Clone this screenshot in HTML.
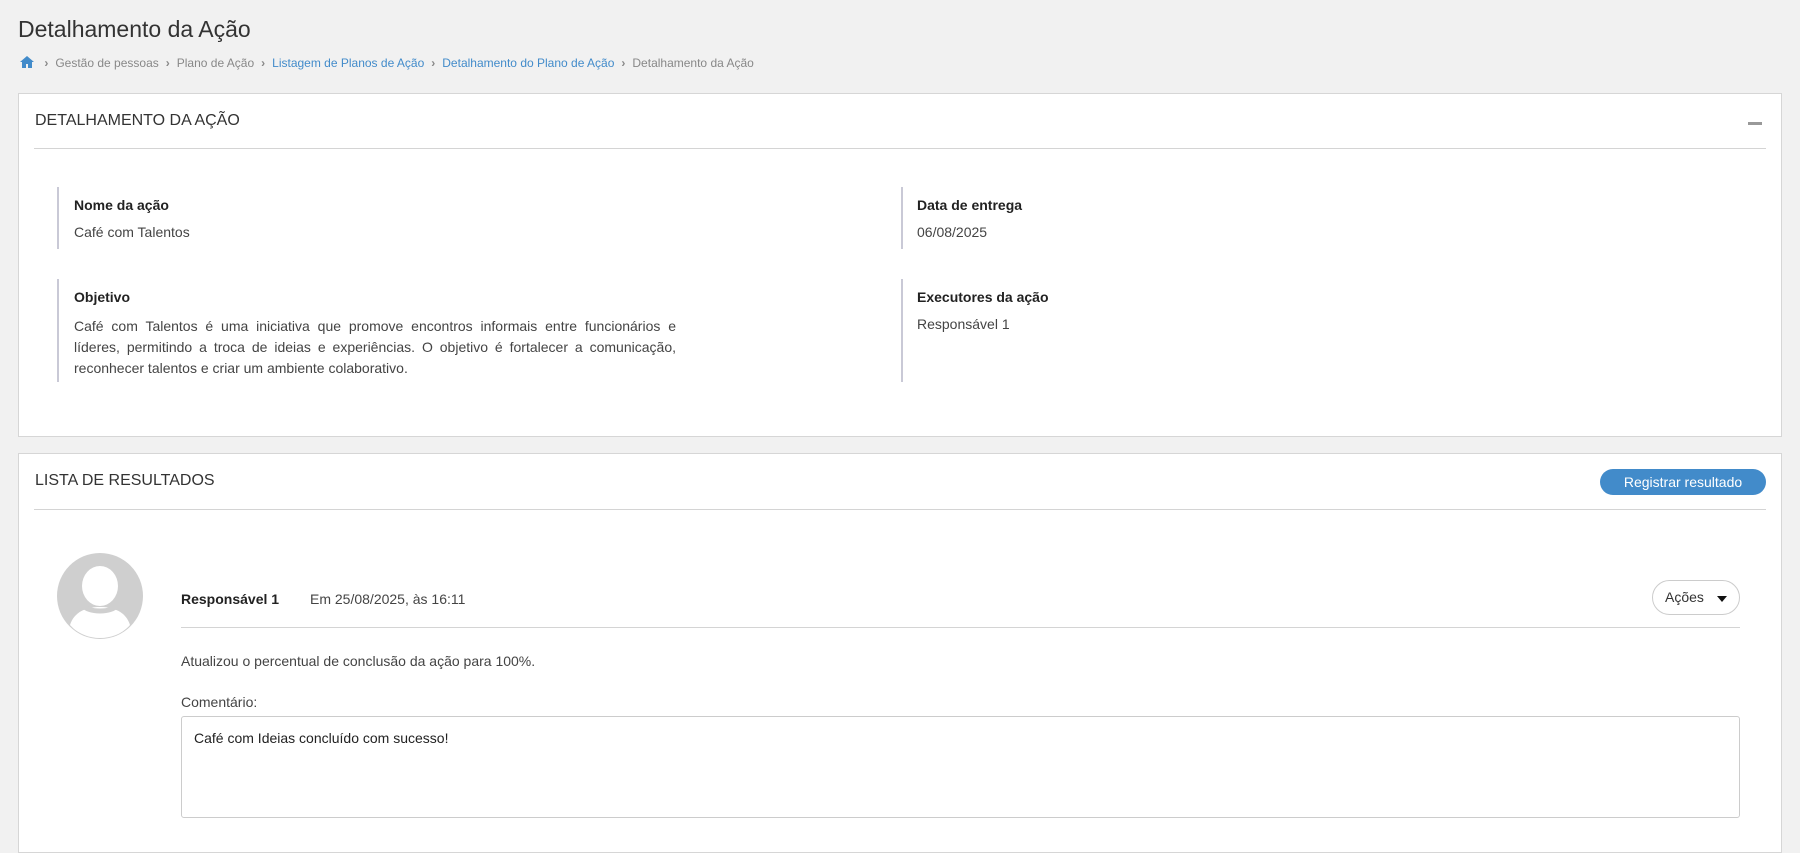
<!DOCTYPE html>
<html><head><meta charset="utf-8"><style>
*{box-sizing:border-box;margin:0;padding:0}
body{width:1800px;height:835px;background:#f1f1f1;font-family:"Liberation Sans",sans-serif;color:#333;position:relative;overflow:hidden}
.a{position:absolute;white-space:nowrap}
.panel{position:absolute;left:18px;width:1764px;background:#fff;border:1px solid #d6d6d6}
.hl{position:absolute;left:15px;right:15px;height:1px;background:#d4d4d4}
.lbl{font-weight:bold;font-size:14px;color:#222}
.val{font-size:14px;color:#444}
.bar{position:absolute;width:2px;background:#c9c9d6}
.sep{margin:0 7px;font-weight:bold;color:#888}
</style></head><body>
<div class="a" style="left:18px;top:16px;font-size:23px;color:#333">Detalhamento da Ação</div>
<div class="a" style="left:20px;top:56px;font-size:12px;color:#888">
<svg width="14" height="12" viewBox="0 0 14 12" style="vertical-align:-1px"><path d="M7 0L0 6h2v6h4V8h2v4h4V6h2z" fill="#428bca"/></svg>
<span class="sep">›</span>Gestão de pessoas<span class="sep">›</span>Plano de Ação<span class="sep">›</span><span style="color:#428bca">Listagem de Planos de Ação</span><span class="sep">›</span><span style="color:#428bca">Detalhamento do Plano de Ação</span><span class="sep">›</span>Detalhamento da Ação</div>

<div class="panel" style="top:93px;height:344px">
<div class="a" style="left:16px;top:18px;font-size:16px;color:#333">DETALHAMENTO DA AÇÃO</div>
<div class="a" style="left:1729px;top:28px;width:14px;height:3px;background:#999"></div>
<div class="hl" style="top:54px"></div>
<div class="bar" style="left:38px;top:93px;height:62px"></div>
<div class="a lbl" style="left:55px;top:103px">Nome da ação</div>
<div class="a val" style="left:55px;top:130px">Café com Talentos</div>
<div class="bar" style="left:38px;top:185px;height:103px"></div>
<div class="a lbl" style="left:55px;top:195px">Objetivo</div>
<div class="a val" style="left:55px;top:222px;line-height:21px;white-space:normal;width:602px;text-align:justify">Café com Talentos é uma iniciativa que promove encontros informais entre funcionários e líderes, permitindo a troca de ideias e experiências. O objetivo é fortalecer a comunicação, reconhecer talentos e criar um ambiente colaborativo.</div>
<div class="bar" style="left:882px;top:93px;height:62px"></div>
<div class="a lbl" style="left:898px;top:103px">Data de entrega</div>
<div class="a val" style="left:898px;top:130px">06/08/2025</div>
<div class="bar" style="left:882px;top:185px;height:103px"></div>
<div class="a lbl" style="left:898px;top:195px">Executores da ação</div>
<div class="a val" style="left:898px;top:222px">Responsável 1</div>
</div>

<div class="panel" style="top:453px;height:400px">
<div class="a" style="left:16px;top:18px;font-size:16px;color:#333">LISTA DE RESULTADOS</div>
<div class="a" style="left:1581px;top:15px;width:166px;height:26px;border-radius:13px;background:#428bca;color:#fff;font-size:14px;text-align:center;line-height:26px">Registrar resultado</div>
<div class="hl" style="top:55px"></div>
<svg class="a" style="left:38px;top:99px" width="86" height="86" viewBox="0 0 86 86"><circle cx="43" cy="43" r="43" fill="#cfcfcf"/><ellipse cx="43" cy="33" rx="18" ry="20" fill="#fff"/><path d="M13 72c4-13 16-18 30-18s26 5 30 18c-8 9-19 13-30 13s-22-4-30-13z" fill="#fff"/><path d="M25 52c4 4 10 6 18 6s14-2 18-6" stroke="#cfcfcf" stroke-width="5" fill="none"/></svg>
<div class="a" style="left:162px;top:137px;font-size:14px;font-weight:bold;color:#222">Responsável 1</div>
<div class="a" style="left:291px;top:137px;font-size:14px;color:#444">Em 25/08/2025, às 16:11</div>
<div class="a" style="left:1633px;top:126px;width:88px;height:35px;border:1px solid #ccc;border-radius:18px;font-size:14px;color:#333;line-height:33px;padding-left:12px">Ações<span style="position:absolute;left:64px;top:15px;border-left:5px solid transparent;border-right:5px solid transparent;border-top:6px solid #111"></span></div>
<div class="a" style="left:162px;top:173px;width:1559px;height:1px;background:#d4d4d4"></div>
<div class="a val" style="left:162px;top:199px">Atualizou o percentual de conclusão da ação para 100%.</div>
<div class="a val" style="left:162px;top:240px">Comentário:</div>
<div class="a" style="left:162px;top:262px;width:1559px;height:102px;border:1px solid #ccc;border-radius:3px;font-size:14px;color:#222;padding:13px 12px">Café com Ideias concluído com sucesso!</div>
</div>
</body></html>
